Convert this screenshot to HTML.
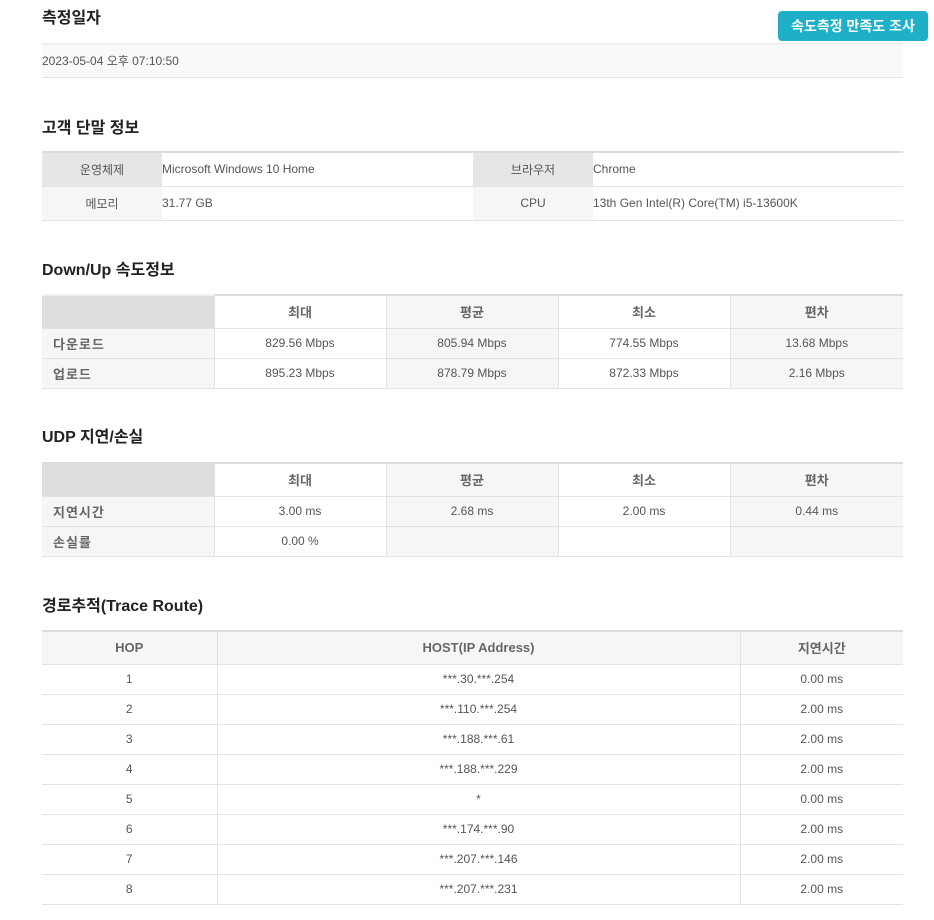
<!DOCTYPE html>
<html><head><meta charset="utf-8"><style>
*{margin:0;padding:0;box-sizing:border-box}
body{width:934px;height:920px;background:#fff;font-family:"Liberation Sans","Noto Sans CJK KR",sans-serif;position:relative;overflow:hidden;color:#555}
h2{position:absolute;left:42px;font-size:16px;font-weight:bold;color:#222;line-height:20px}
.btn{position:absolute;left:778px;top:11px;width:150px;height:30px;background:#1eb0c6;border-radius:4px;color:#fff;font-size:14px;font-weight:bold;text-align:center;line-height:30px}
table{position:absolute;left:42px;width:861px;border-collapse:collapse;table-layout:fixed;border-top:2px solid #ddd;font-size:12px}
td,th{border-bottom:1px solid #e3e3e3;text-align:center;color:#555;font-weight:normal}
th{font-weight:bold;color:#666;font-size:13px}
.vl{border-left:1px solid #e3e3e3}
.g{background:#f6f6f6}
.d{background:#dedede}
.lbl{text-align:left;padding-left:11px;font-weight:bold;color:#666;font-size:13px;letter-spacing:1px}
</style></head><body>
<h2 style="top:9px">측정일자</h2>
<div class="btn">속도측정 만족도 조사</div>
<table style="top:43px"><tr style="height:33px"><td style="text-align:left;background:#f9f9f9;border-top:2px solid #f0f0f0">2023-05-04 오후 07:10:50</td></tr></table>

<h2 style="top:119px">고객 단말 정보</h2>
<table style="top:151px">
<col style="width:120px"><col style="width:311px"><col style="width:120px"><col>
<tr style="height:34px"><td style="background:#e6e6e6">운영체제</td><td style="text-align:left">Microsoft Windows 10 Home</td><td style="background:#e6e6e6">브라우저</td><td style="text-align:left">Chrome</td></tr>
<tr style="height:34px"><td class="g">메모리</td><td style="text-align:left">31.77 GB</td><td class="g">CPU</td><td style="text-align:left">13th Gen Intel(R) Core(TM) i5-13600K</td></tr>
</table>

<h2 style="top:261px">Down/Up 속도정보</h2>
<table style="top:294px">
<col style="width:172px"><col style="width:172px"><col style="width:172px"><col style="width:172px"><col>
<tr style="height:33px"><th class="d" style="border-top:2px solid #f0f0f0"></th><th class="vl">최대</th><th class="g vl">평균</th><th class="vl">최소</th><th class="g vl">편차</th></tr>
<tr style="height:30px"><td class="g lbl">다운로드</td><td class="vl">829.56 Mbps</td><td class="g vl">805.94 Mbps</td><td class="vl">774.55 Mbps</td><td class="g vl">13.68 Mbps</td></tr>
<tr style="height:30px"><td class="g lbl">업로드</td><td class="vl">895.23 Mbps</td><td class="g vl">878.79 Mbps</td><td class="vl">872.33 Mbps</td><td class="g vl">2.16 Mbps</td></tr>
</table>

<h2 style="top:428px">UDP 지연/손실</h2>
<table style="top:462px">
<col style="width:172px"><col style="width:172px"><col style="width:172px"><col style="width:172px"><col>
<tr style="height:33px"><th class="d"></th><th class="vl">최대</th><th class="g vl">평균</th><th class="vl">최소</th><th class="g vl">편차</th></tr>
<tr style="height:30px"><td class="g lbl">지연시간</td><td class="vl">3.00 ms</td><td class="g vl">2.68 ms</td><td class="vl">2.00 ms</td><td class="g vl">0.44 ms</td></tr>
<tr style="height:30px"><td class="g lbl">손실률</td><td class="vl">0.00 %</td><td class="g vl"></td><td class="vl"></td><td class="g vl"></td></tr>
</table>

<h2 style="top:597px">경로추적(Trace Route)</h2>
<table style="top:630px">
<col style="width:175px"><col style="width:523px"><col>
<tr style="height:33px" class="g"><th>HOP</th><th class="vl">HOST(IP Address)</th><th class="vl">지연시간</th></tr>
<tr style="height:30px"><td>1</td><td class="vl">***.30.***.254</td><td class="vl">0.00 ms</td></tr>
<tr style="height:30px"><td>2</td><td class="vl">***.110.***.254</td><td class="vl">2.00 ms</td></tr>
<tr style="height:30px"><td>3</td><td class="vl">***.188.***.61</td><td class="vl">2.00 ms</td></tr>
<tr style="height:30px"><td>4</td><td class="vl">***.188.***.229</td><td class="vl">2.00 ms</td></tr>
<tr style="height:30px"><td>5</td><td class="vl">*</td><td class="vl">0.00 ms</td></tr>
<tr style="height:30px"><td>6</td><td class="vl">***.174.***.90</td><td class="vl">2.00 ms</td></tr>
<tr style="height:30px"><td>7</td><td class="vl">***.207.***.146</td><td class="vl">2.00 ms</td></tr>
<tr style="height:30px"><td>8</td><td class="vl">***.207.***.231</td><td class="vl">2.00 ms</td></tr>
</table>
</body></html>
